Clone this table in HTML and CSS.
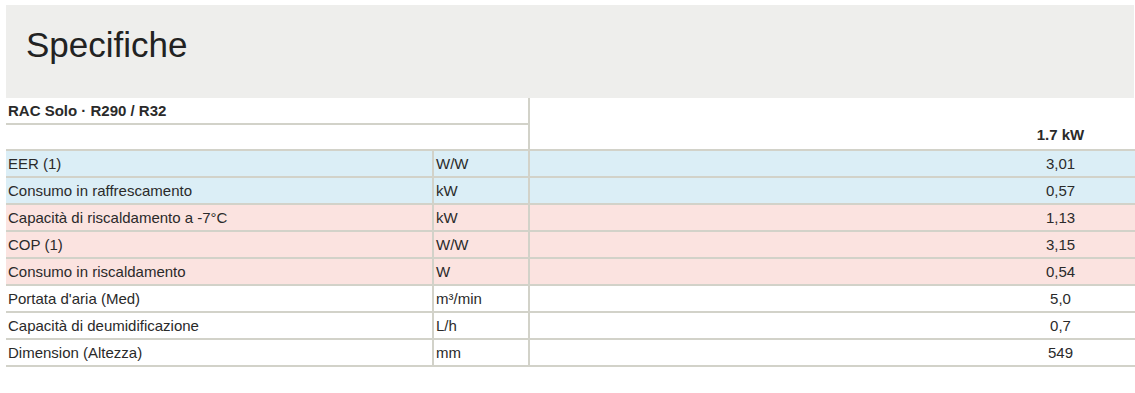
FILE: index.html
```html
<!DOCTYPE html>
<html lang="it">
<head>
<meta charset="utf-8">
<title>Specifiche</title>
<link rel="stylesheet" href="styles.css">
</head>
<body>
<div class="page">
  <div class="hero"><h1 class="hero-title">Specifiche</h1></div>
  <div class="table-wrap">
    <table class="spec">
      <colgroup><col class="c-label"><col class="c-unit"><col class="c-val"></colgroup>
      <thead>
        <tr><th colspan="2" class="series">RAC Solo · R290 / R32</th><th rowspan="2" class="model">1.7 kW</th></tr>
        <tr><th colspan="2" class="blank"></th></tr>
      </thead>
      <tbody>
        <tr class="cool"><td>EER (1)</td><td>W/W</td><td class="val">3,01</td></tr>
        <tr class="cool"><td>Consumo in raffrescamento</td><td>kW</td><td class="val">0,57</td></tr>
        <tr class="heat"><td>Capacità di riscaldamento a -7°C</td><td>kW</td><td class="val">1,13</td></tr>
        <tr class="heat"><td>COP (1)</td><td>W/W</td><td class="val">3,15</td></tr>
        <tr class="heat"><td>Consumo in riscaldamento</td><td>W</td><td class="val">0,54</td></tr>
        <tr><td>Portata d'aria (Med)</td><td>m³/min</td><td class="val">5,0</td></tr>
        <tr><td>Capacità di deumidificazione</td><td>L/h</td><td class="val">0,7</td></tr>
        <tr><td>Dimension (Altezza)</td><td>mm</td><td class="val">549</td></tr>
      </tbody>
    </table>
  </div>
</div>
</body>
</html>
```

FILE: styles.css
```css
html, body {
  margin: 0;
  padding: 0;
  background: #ffffff;
  overflow: hidden;
}
.page {
  padding: 5px 0 0 6px;
  font-family: "Liberation Sans", Arial, sans-serif;
  color: #2a2a2a;
}
.hero {
  width: 1128px;
  height: 93px;
  box-sizing: border-box;
  background: #eeeeec;
  padding: 21px 0 0 20px;
}
.hero-title {
  margin: 0;
  font-size: 35px;
  font-weight: normal;
  line-height: 38px;
  color: #222222;
}
.table-wrap {
  width: 1129px;
  overflow: hidden;
}
.spec {
  border-collapse: collapse;
  table-layout: fixed;
  width: 1585px;
  font-size: 15px;
}
.c-label { width: 427px; }
.c-unit { width: 96px; }
.c-val { width: 1062px; }
.spec th, .spec td {
  height: 27px;
  padding: 0 0 0 2px;
  box-sizing: border-box;
  text-align: left;
  vertical-align: middle;
  border-bottom: 2px solid #d2d2c9;
  line-height: 17px;
}
.spec thead th {
  height: 26px;
}
.spec td + td, .spec th.model {
  border-left: 2px solid #d2d2c9;
}
.spec th {
  font-weight: bold;
}
.spec th.model {
  text-align: center;
  vertical-align: bottom;
  padding: 0 0 6px 0;
}
.spec td.val {
  text-align: center;
  padding: 0;
}
.cool td { background: #dbeef6; }
.heat td { background: #fbe3e0; }
```
